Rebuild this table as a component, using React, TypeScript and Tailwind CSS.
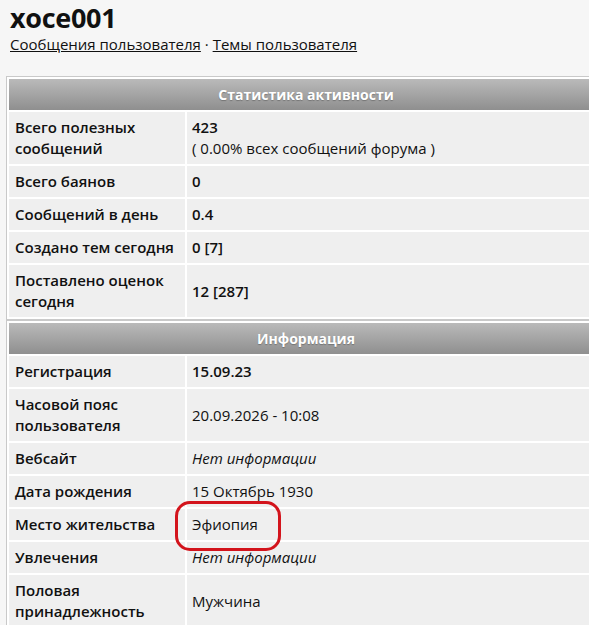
import React from 'react';

type Row = {
  label: string;
  value: React.ReactNode;
};

const stats: Row[] = [
  {
    label: 'Всего полезных сообщений',
    value: (
      <>
        <b className="font-semibold">423</b>
        <br />
        <span>( 0.00% всех сообщений форума )</span>
      </>
    ),
  },
  { label: 'Всего баянов', value: <b className="font-semibold">0</b> },
  { label: 'Сообщений в день', value: <b className="font-semibold">0.4</b> },
  { label: 'Создано тем сегодня', value: <b className="font-semibold">0 [7]</b> },
  { label: 'Поставлено оценок сегодня', value: <b className="font-semibold">12 [287]</b> },
];

const info: Row[] = [
  { label: 'Регистрация', value: <b className="font-semibold">15.09.23</b> },
  { label: 'Часовой пояс пользователя', value: '20.09.2026 - 10:08' },
  { label: 'Вебсайт', value: <i>Нет информации</i> },
  { label: 'Дата рождения', value: '15 Октябрь 1930' },
  {
    label: 'Место жительства',
    value: (
      <>
        Эфиопия
        {/* hand-drawn highlight over the value */}
        <span className="absolute z-10 left-[-12px] top-[-8px] w-[106px] h-[50px] border-[3px] border-[#d3141c] rounded-[15px] pointer-events-none" />
      </>
    ),
  },
  { label: 'Увлечения', value: <i>Нет информации</i> },
  { label: 'Половая принадлежность', value: 'Мужчина' },
];

function ProfileTable({ title, rows }: { title: string; rows: Row[] }) {
  return (
    <table className="w-[600px] border border-[#c9c9c9] bg-white border-separate border-spacing-[2px]">
      <thead>
        <tr>
          <th
            colSpan={2}
            className="h-[31px] bg-gradient-to-b from-[#bababa] to-[#8f8f8f] text-white font-bold text-[14px] text-center [text-shadow:0_1px_1px_rgba(0,0,0,0.25)]"
          >
            {title}
          </th>
        </tr>
      </thead>
      <tbody>
        {rows.map((r) => (
          <tr key={r.label}>
            <td className="w-[176px] h-[31px] bg-[#efefef] px-[6px] py-[5px] font-semibold align-middle leading-[21px]">
              {r.label}
            </td>
            <td className="relative h-[31px] bg-[#efefef] px-[5px] py-[5px] align-middle leading-[21px]">{r.value}</td>
          </tr>
        ))}
      </tbody>
    </table>
  );
}

export default function App() {
  return (
    <div className="w-[589px] h-[625px] overflow-hidden bg-[#f6f6f6] text-[#111] text-[15px] font-['Open_Sans',sans-serif]">
      <div className="px-[10px] pt-[1px]">
        <h1 className="text-[27px] font-bold leading-[33px] tracking-[-0.3px]">xoce001</h1>
        <div className="leading-[20px]">
          <a className="underline">Сообщения пользователя</a>
          <span> · </span>
          <a className="underline">Темы пользователя</a>
        </div>
      </div>
      <div className="pl-[6px] pt-[22px] flex flex-col">
        <ProfileTable title="Статистика активности" rows={stats} />
        <ProfileTable title="Информация" rows={info} />
      </div>
    </div>
  );
}
